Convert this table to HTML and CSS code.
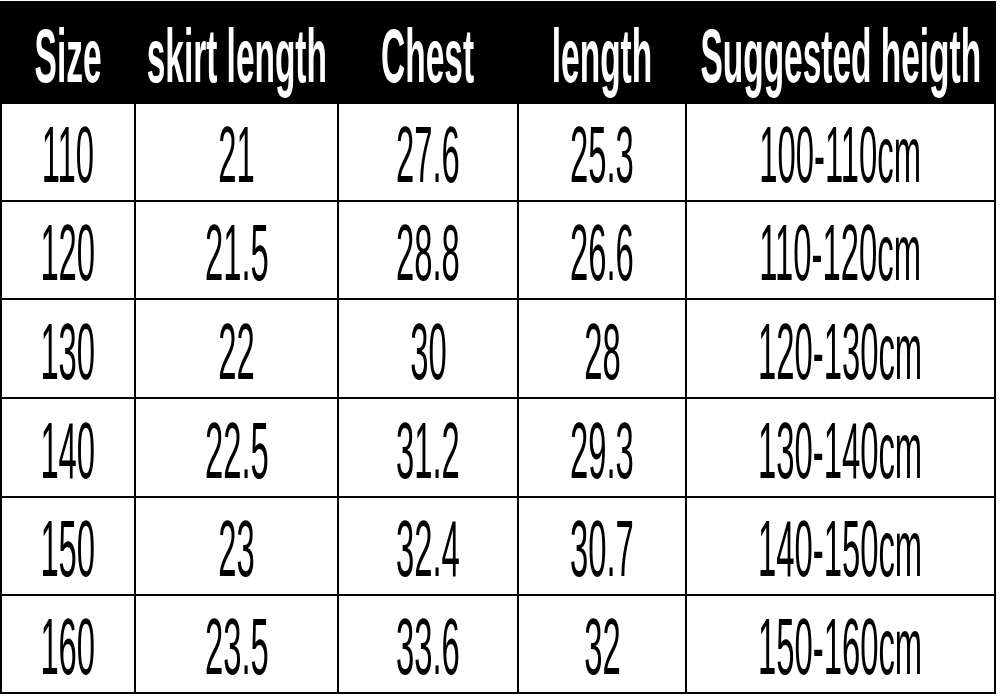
FILE: index.html
```html
<!DOCTYPE html>
<html lang="en">
<head>
<meta charset="utf-8">
<title>Size chart</title>
<link rel="stylesheet" href="styles.css">
</head>
<body>
<table class="chart">
  <colgroup>
    <col class="c1"><col class="c2"><col class="c3"><col class="c4"><col class="c5">
  </colgroup>
  <thead>
    <tr>
      <th><div class="cell"><span>Size</span></div></th>
      <th><div class="cell"><span>skirt length</span></div></th>
      <th><div class="cell"><span>Chest</span></div></th>
      <th><div class="cell"><span>length</span></div></th>
      <th><div class="cell"><span>Suggested heigth</span></div></th>
    </tr>
  </thead>
  <tbody>
    <tr>
      <td><div class="cell"><span>110</span></div></td>
      <td><div class="cell"><span>21</span></div></td>
      <td><div class="cell"><span>27.6</span></div></td>
      <td><div class="cell"><span>25.3</span></div></td>
      <td><div class="cell"><span>100-110cm</span></div></td>
    </tr>
    <tr>
      <td><div class="cell"><span>120</span></div></td>
      <td><div class="cell"><span>21.5</span></div></td>
      <td><div class="cell"><span>28.8</span></div></td>
      <td><div class="cell"><span>26.6</span></div></td>
      <td><div class="cell"><span>110-120cm</span></div></td>
    </tr>
    <tr>
      <td><div class="cell"><span>130</span></div></td>
      <td><div class="cell"><span>22</span></div></td>
      <td><div class="cell"><span>30</span></div></td>
      <td><div class="cell"><span>28</span></div></td>
      <td><div class="cell"><span>120-130cm</span></div></td>
    </tr>
    <tr>
      <td><div class="cell"><span>140</span></div></td>
      <td><div class="cell"><span>22.5</span></div></td>
      <td><div class="cell"><span>31.2</span></div></td>
      <td><div class="cell"><span>29.3</span></div></td>
      <td><div class="cell"><span>130-140cm</span></div></td>
    </tr>
    <tr>
      <td><div class="cell"><span>150</span></div></td>
      <td><div class="cell"><span>23</span></div></td>
      <td><div class="cell"><span>32.4</span></div></td>
      <td><div class="cell"><span>30.7</span></div></td>
      <td><div class="cell"><span>140-150cm</span></div></td>
    </tr>
    <tr>
      <td><div class="cell"><span>160</span></div></td>
      <td><div class="cell"><span>23.5</span></div></td>
      <td><div class="cell"><span>33.6</span></div></td>
      <td><div class="cell"><span>32</span></div></td>
      <td><div class="cell"><span>150-160cm</span></div></td>
    </tr>
  </tbody>
</table>
</body>
</html>
```
FILE: styles.css
```css
html, body {
  margin: 0;
  padding: 0;
  background: #fff;
}

.chart {
  border-collapse: collapse;
  table-layout: fixed;
  width: 996px;
  margin: 1px 0 0 0;
  font-family: "Liberation Sans", Arial, sans-serif;
  color: #000;
}

.c1 { width: 134px; }
.c2 { width: 203px; }
.c3 { width: 180px; }
.c4 { width: 168px; }
.c5 { width: 309px; }

.chart th,
.chart td {
  border: 2px solid #000;
  padding: 0;
  overflow: visible;
}

.chart th {
  background: #000;
  color: #fff;
  height: 99px;
  font-weight: 700;
  font-size: 76px;
}

.chart td {
  height: 96px;
  font-weight: 400;
  font-size: 80px;
}

.chart tbody tr:nth-child(n+3) td {
  height: 97px;
}

.chart tbody tr:nth-child(n+5) td {
  height: 96px;
}

.cell {
  display: flex;
  justify-content: center;
  align-items: center;
  line-height: 1;
  padding-top: 6px;
}

.cell span {
  display: inline-block;
  white-space: nowrap;
  transform: scaleX(0.41);
}

.chart th .cell span {
  transform: scaleX(0.44);
}
```
